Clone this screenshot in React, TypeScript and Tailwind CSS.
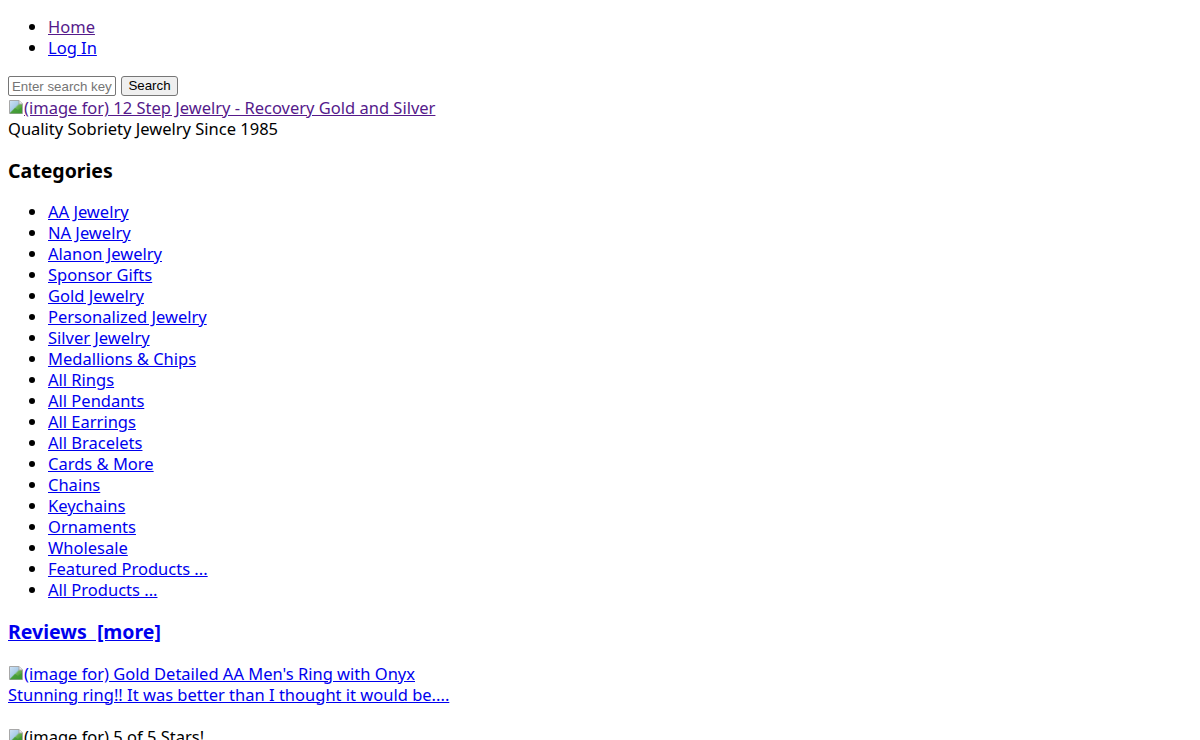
import React from "react";

const BrokenImg = () => (
  <svg width="16" height="16" viewBox="0 0 16 16" className="inline-block align-[-1px]">
    <defs>
      <linearGradient id="bi" x1="0" y1="0" x2="1" y2="1">
        <stop offset="0" stopColor="#cfe3f5" />
        <stop offset="0.45" stopColor="#a9cbe8" />
        <stop offset="0.55" stopColor="#6bb04e" />
        <stop offset="1" stopColor="#2f8a2a" />
      </linearGradient>
    </defs>
    <path d="M1.5 1.5h9.5l3.5 3.5v9.5h-13z" fill="url(#bi)" stroke="#a8a8a8" />
    <path d="M11 1.5v3.5h3.5" fill="#f2f2f2" stroke="#a8a8a8" />
    <path d="M2 14l5-5 3 2 4-3v6.5h-12z" fill="#3e9a33" opacity="0.8" />
  </svg>
);

const cats = [
  "AA Jewelry",
  "NA Jewelry",
  "Alanon Jewelry",
  "Sponsor Gifts",
  "Gold Jewelry",
  "Personalized Jewelry",
  "Silver Jewelry",
  "Medallions & Chips",
  "All Rings",
  "All Pendants",
  "All Earrings",
  "All Bracelets",
  "Cards & More",
  "Chains",
  "Keychains",
  "Ornaments",
  "Wholesale",
  "Featured Products ...",
  "All Products ...",
];

export default function App() {
  return (
    <div
      className="bg-white text-black px-2 text-[16.5px] leading-[21px] h-[740px] overflow-hidden"
      style={{ fontFamily: '"Noto Sans", "Open Sans", sans-serif' }}
    >
      <ul className="list-disc pl-10 my-4">
        <li><a href="#" className="underline text-[#551a8b]">Home</a></li>
        <li><a href="#" className="underline text-[#0000ee]">Log In</a></li>
      </ul>
      <div className="flex items-start gap-[5px] h-[23px] pt-[2px]">
        <input
          placeholder="Enter search keywords here"
          className="w-[108px] h-[20px] border border-[#767676] rounded-[2px] px-[3px] text-[13.3px] placeholder:text-[#757575]"
          style={{ fontFamily: '"Liberation Sans", Arial, sans-serif' }}
        />
        <button
          className="h-[20px] w-[57px] border border-[#767676] rounded-[3px] bg-[#efefef] text-[13.3px] leading-none"
          style={{ fontFamily: '"Liberation Sans", Arial, sans-serif' }}
        >
          Search
        </button>
      </div>
      <div>
        <a href="#" className="underline text-[#551a8b]"><BrokenImg />(image for) 12 Step Jewelry - Recovery Gold and Silver</a>
      </div>
      <div>Quality Sobriety Jewelry Since 1985</div>
      <h3 className="font-bold text-[19.5px] leading-[26px] mt-[18.72px] mb-[17.7px]">Categories</h3>
      <ul className="list-disc pl-10 my-4">
        {cats.map((c) => (
          <li key={c}><a href="#" className="underline text-[#0000ee]">{c}</a></li>
        ))}
      </ul>
      <h3 className="font-bold text-[19.5px] leading-[26px] mt-[18.7px] mb-[17.7px]">
        <a href="#" className="underline text-[#0000ee] whitespace-pre">Reviews  [more]</a>
      </h3>
      <p className="my-4">
        <a href="#" className="underline text-[#0000ee]"><BrokenImg />(image for) Gold Detailed AA Men's Ring with Onyx</a>
        <br />
        <a href="#" className="underline text-[#0000ee]">Stunning ring!! It was better than I thought it would be....</a>
      </p>
      <p className="mt-[21px]">
        <BrokenImg />(image for) 5 of 5 Stars!
      </p>
    </div>
  );
}
